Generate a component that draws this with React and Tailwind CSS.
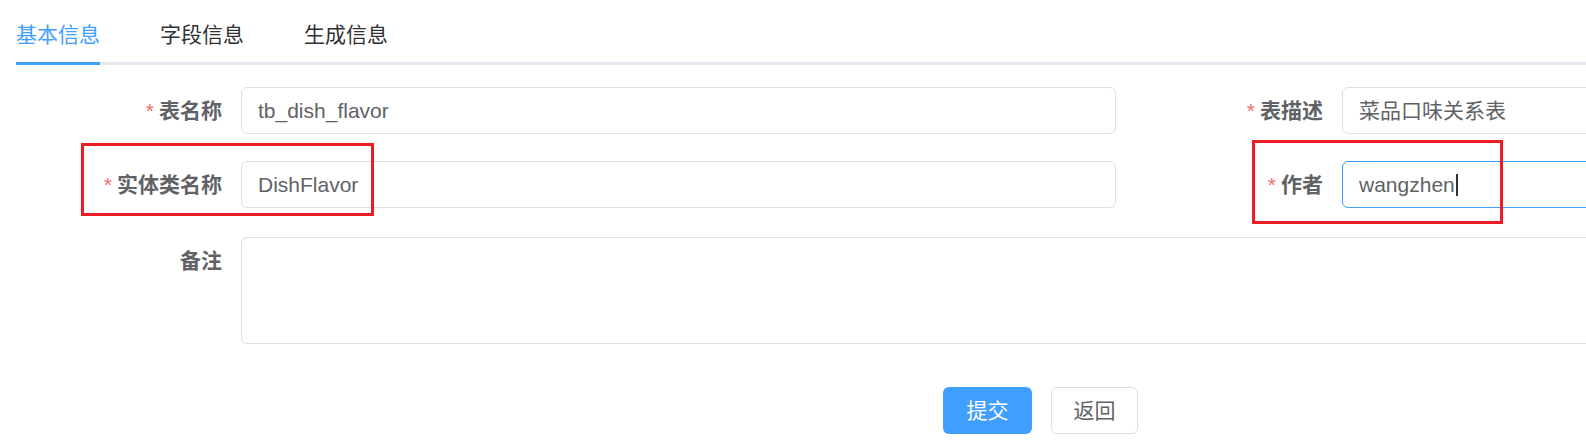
import React from "react";

const FONT = { fontFamily: '"Liberation Sans", "Noto Sans CJK SC", sans-serif' };

function Label({ required, children }) {
  return (
    <div className="w-[226px] shrink-0 pr-[19px] text-right h-[47px] leading-[47px] text-[21px] font-bold text-[#606266]">
      {required && <span className="text-[#f56c6c] mr-[5px] font-normal">*</span>}
      {children}
    </div>
  );
}

function Field({ value, focused, caret }) {
  return (
    <div
      className={
        "w-[875px] shrink-0 h-[47px] rounded-[6px] border px-[16px] flex items-center text-[21px] text-[#606266] bg-white " +
        (focused ? "border-[#409eff]" : "border-[#dcdfe6]")
      }
    >
      <span>{value}</span>
      {caret && <span className="inline-block w-[2px] h-[22px] bg-[#303133] ml-[1px]" />}
    </div>
  );
}

export default function App() {
  const tabs = ["基本信息", "字段信息", "生成信息"];
  return (
    <div className="relative w-[1586px] h-[443px] overflow-hidden bg-white" style={FONT}>
      {/* Tabs */}
      <div className="ml-[16px] mt-[2px] flex border-b-[3px] border-[#e4e7ed]">
        {tabs.map((t, i) => (
          <div
            key={t}
            className={"h-[60px] pt-[6px] flex items-center text-[21px] " + (i === 0 ? "pl-0 pr-[30px]" : "px-[30px]")}
          >
            <span className={"relative h-full flex items-center " + (i === 0 ? "text-[#409eff]" : "text-[#303133]")}>
              {t}
              {i === 0 && <span className="absolute left-0 right-0 bottom-[-3px] h-[3px] bg-[#409eff]" />}
            </span>
          </div>
        ))}
      </div>

      {/* Form */}
      <div className="ml-[15px] mt-[22px]">
        <div className="flex mb-[27px]">
          <div className="flex w-[1101px] shrink-0">
            <Label required>表名称</Label>
            <Field value="tb_dish_flavor" />
          </div>
          <div className="flex w-[1101px] shrink-0">
            <Label required>表描述</Label>
            <Field value="菜品口味关系表" />
          </div>
        </div>
        <div className="flex mb-[29px]">
          <div className="flex w-[1101px] shrink-0">
            <Label required>实体类名称</Label>
            <Field value="DishFlavor" />
          </div>
          <div className="flex w-[1101px] shrink-0">
            <Label required>作者</Label>
            <Field value="wangzhen" focused caret />
          </div>
        </div>
        <div className="flex mb-[43px]">
          <Label>备注</Label>
          <div className="w-[1976px] shrink-0 h-[107px] rounded-[6px] border border-[#dcdfe6] bg-white" />
        </div>
        <div className="flex gap-[19px] ml-[928px]">
          <button className="w-[89px] h-[47px] rounded-[6px] bg-[#409eff] text-white text-[21px]">提交</button>
          <button className="w-[87px] h-[47px] rounded-[6px] border border-[#dcdfe6] bg-white text-[#606266] text-[21px]">返回</button>
        </div>
      </div>

      {/* Red annotation boxes */}
      <div className="absolute left-[81px] top-[143px] w-[293px] h-[73px] border-[3px] border-[#ed1c24]" />
      <div className="absolute left-[1252px] top-[140px] w-[251px] h-[84px] border-[3px] border-[#ed1c24]" />
    </div>
  );
}
